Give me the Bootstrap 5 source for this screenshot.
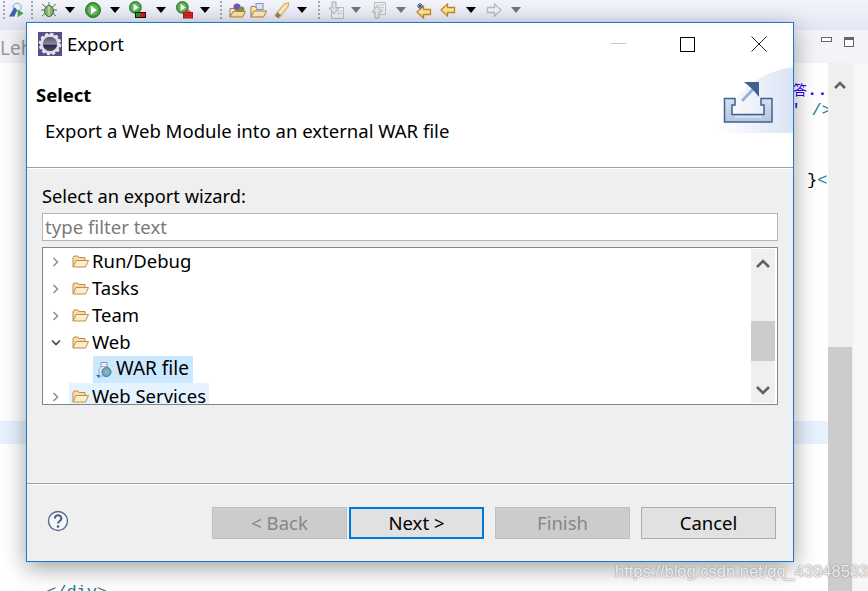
<!DOCTYPE html>
<html lang="en">
<head>
<meta charset="utf-8">
<title>Export</title>
<link rel="stylesheet" href="https://cdn.jsdelivr.net/npm/bootstrap@5.3.0/dist/css/bootstrap.min.css">
<style>
html,body{height:591px;overflow:hidden}
body{width:868px;position:relative;background:#fff;font-family:"Noto Sans","Open Sans",sans-serif;color:#000}
.tbar{height:30px;background:linear-gradient(#f3f4fb,#e3e6f5);display:grid;grid-template-columns:8px 16.5px 15px 19.5px 22.5px 22.5px 22.5px 23px 23.5px 23px 18px 14px 18.5px 23.5px 23px 18px 15px 19px 21.5px 23px 23.5px 23px 23px 23px 23px 22px;align-items:start;padding-top:0}
.tcell{display:flex;justify-content:center;height:20px;align-items:center}
.tgrip{width:2px;height:18px;background-image:linear-gradient(#a8a8a8 50%,transparent 50%);background-size:2px 4px}
.ttri{width:0;height:0;border-left:5.500px solid transparent;border-right:5.500px solid transparent;border-top:6px solid #000;margin-top:-1px}
.ttri-off{border-top-color:#777}
.ed-head{height:33px;background:#f3f4fa;color:#9a9a9a;font-size:19px}
.ed-head .lh{line-height:37px}
.ed-ctl{gap:12px;padding-right:14px;padding-bottom:9px}
.min-ic{width:11px;height:5px;border:1px solid #666;background:#fff;margin-top:-5px}
.max-ic{width:10px;height:10px;border:1px solid #666;border-top-width:3px;background:#fff}
.ed-body{height:528px}
.ed-code{flex:1;position:relative}
.hl-line{margin-top:358px;height:23px;background:#e8f2fe}
.code-end{margin-top:139px;padding-left:46px;color:#14828c;font-family:"Liberation Mono",monospace;font-size:17px;line-height:20px}
.code-side{position:absolute;left:793px;font-family:"Liberation Mono",monospace;font-size:17px;line-height:20px;white-space:nowrap}
.cs1{top:16px;color:#2a00ff;font-weight:700}
.cs1 i{font-style:normal;font-weight:400;font-size:14px;font-family:"Noto Sans CJK SC",sans-serif}
.cs2{top:38px;left:791px;color:#14828c}
.cs2 b{color:#2a00ff;font-weight:400}
.cs3{top:108px;left:807px;color:#14828c}
.cs3 b{color:#000;font-weight:400}
.ed-track{width:25px;background:#efefef;display:flex;flex-direction:column}
.ed-track .ed-sp{height:284px}
.ed-thumb{flex:1;background:#ccc;margin-right:1px}
.ed-rail{width:15px;background:#f7f7f7}
.up-ch{padding:8px 0 0 6px}
.dlg{position:absolute;left:26px;top:22px;width:768px;height:540px;border:1px solid #1a79cf;background:#efefef;box-shadow:0 6px 22px rgba(0,0,0,.38);display:flex;flex-direction:column}
.dlg-top{background:#fff;height:145px;border-bottom:1px solid #a0a0a0;position:relative;flex:none}
.dlg-title{height:42px;font-size:18.500px;padding-left:11px;gap:5px}
.win-btns{margin-left:auto;margin-right:-1px}
.win-b{width:71px;height:42px;display:flex;align-items:center;justify-content:center}
.win-b1{padding-left:4px}
.sel-h{font-weight:700;font-size:18.500px;line-height:24px;padding:18px 0 0 9px}
.sel-d{font-size:18.550px;line-height:24px;padding:12px 0 0 18px}
.ban{position:absolute;right:0;top:44px;width:76px;height:66px}
.wiz{flex:1;border-top:1px solid #fff;padding:15px 15px 0;font-size:18.500px;position:relative}
.wiz-l{line-height:24px;margin-bottom:5px;font-size:18.300px}
.flt{display:block;width:736px;height:28px;border:1px solid #b4b4b4;background:#fff;padding:0 2px 2px;font-size:18.600px;line-height:24px;color:#7a7a7a;border-radius:0;font-family:inherit}
.flt::placeholder{color:#7a7a7a;opacity:1}
.flt:focus{outline:0;box-shadow:none}
.tree{width:736px;height:158px;margin-top:6px;border:1px solid #83858c;background:#fff;overflow:hidden;display:flex}
.tree-l{flex:1;min-width:0}
.trow{height:27px;display:flex;align-items:center;position:relative}
.tlbl{padding-bottom:2px}
.twist{width:26px;display:flex;justify-content:center;flex:none}
.fld{margin:0 3px 0 0;flex:none}
.hl-a{background:#e5f3ff;width:140px;height:27px;display:flex;align-items:center;padding-left:3px;flex:none}
.hl-s{background:#cce8ff;height:27px;margin-left:50px;display:flex;align-items:center;width:100px;padding-left:2px;gap:3px;font-size:19px}
.tscr{width:24px;background:#efefef;margin:1px 2px 1px 0;position:relative;flex:none}
.tscr-th{position:absolute;left:0;right:0;top:72px;height:40px;background:#ccc}
.tscr svg{position:absolute;left:5px}
.scr-up{top:10px}
.scr-dn{top:137px}
.foot{height:78px;border-top:1px solid #a0a0a0;box-shadow:inset 0 1px 0 #fff;flex:none;padding:23px 17px 0 20px;align-items:flex-start}
.hlp{margin-top:3px}
.foot .btn{width:135px;height:32px;border-radius:0;font-size:18.500px;padding:0;line-height:28px;font-family:inherit;--bs-btn-disabled-opacity:1}
.foot .bt-off,.foot .bt-off:disabled{background:#ccc;border:1px solid #bfbfbf;color:#868686}
.foot .bt-next{background:#e1e1e1;border:2px solid #0078d7;color:#000;margin:0 11px 0 2px}
.foot .bt-can{background:#e1e1e1;border:1px solid #adadad;color:#000;margin-left:11px}
.mk{position:absolute;left:615px;top:561px;font-family:"Liberation Sans",sans-serif;font-size:16.500px;line-height:20px;color:rgba(255,255,255,.85);text-shadow:0 0 2px #999,0 0 1px #888;white-space:nowrap}
</style>
</head>
<body>
<svg width="0" height="0" class="position-absolute">
<defs>
<symbol id="fold" viewBox="0 0 17 13"><path d="M1 12V2.500L2 1h4l1 1.500h6v3" fill="#f7dca6" stroke="#c08d4e"/><path d="M1 12l3-6.500h12.500L13.500 12z" fill="#fcecc8" stroke="#c08d4e"/></symbol>
<symbol id="play" viewBox="0 0 16 16"><circle cx="8" cy="8" r="7.500" fill="#3f9a3f" stroke="#2b7a30"/><circle cx="8" cy="8" r="5.500" fill="#68b85c"/><path d="M5.800 3.500L12 8l-6.200 4.500z" fill="#fff"/></symbol>
<symbol id="yarrow" viewBox="0 0 16 14"><path d="M1 7l6.500-6v3.500h7v5h-7V13z" fill="#fde59c" stroke="#c68a1e" stroke-width="1.300"/></symbol>
<symbol id="ychev" viewBox="0 0 8 10"><path d="M1.500 1l4 4-4 4" fill="none" stroke="#909090" stroke-width="1.600"/></symbol>
</defs>
</svg>

<div class="tbar">
<div class="tcell"><span class="tgrip"></span></div>
<div class="tcell"><svg width="18" height="18" viewBox="0 0 18 18"><circle cx="10" cy="6" r="4.500" fill="#e8eef8" stroke="#7d9ccb"/><path d="M1 16L7 6l3 3-3 7z" fill="#3d62ad"/><path d="M10.500 8.500l6.500 4-6.500 4.500z" fill="#45a045"/></svg></div>
<div class="tcell"><span class="tgrip"></span></div>
<div class="tcell"><svg width="18" height="18" viewBox="0 0 18 18"><g stroke="#4c7a66"><path d="M2 3l14 12M16 3L2 15M1 9h16M9 1v3"/></g><ellipse cx="9" cy="10" rx="4.500" ry="5.500" fill="#8db868" stroke="#3c6e4e"/><path d="M9 5v10" stroke="#e3ecd2"/></svg></div>
<div class="tcell"><span class="ttri"></span></div>
<div class="tcell"><svg width="16" height="16"><use href="#play"/></svg></div>
<div class="tcell"><span class="ttri"></span></div>
<div class="tcell"><svg width="18" height="18" viewBox="0 0 18 18"><g transform="translate(0 0) scale(.8)"><use href="#play" width="16" height="16"/></g><rect x="6.500" y="11.500" width="10" height="5" fill="#d51c1c" stroke="#111"/><rect x="7" y="12" width="4" height="4" fill="#1e9e2a"/></svg></div>
<div class="tcell"><span class="ttri"></span></div>
<div class="tcell"><svg width="18" height="18" viewBox="0 0 18 18"><g transform="scale(.8)"><use href="#play" width="16" height="16"/></g><rect x="7.500" y="11.500" width="9" height="5.500" fill="#e02a2a" stroke="#b01818"/><path d="M10 11.500V10h4v1.500M7.500 14h9" stroke="#b01818" fill="none"/></svg></div>
<div class="tcell"><span class="ttri"></span></div>
<div class="tcell"><span class="tgrip"></span></div>
<div class="tcell"><svg width="17" height="17" viewBox="0 0 17 17"><circle cx="8" cy="5" r="3.500" fill="#6a5aa8"/><circle cx="12.500" cy="7.500" r="3" fill="#5f9e58"/><svg y="3" width="17" height="13" viewBox="0 0 17 13"><path d="M1 12V3.500h4l1 1.500h2v.5h6" fill="none" stroke="#b87f2e"/><path d="M1 12l3-5.500h12.500L13.500 12z" fill="#fbe3a8" stroke="#b87f2e"/></svg></svg></div>
<div class="tcell"><svg width="17" height="17" viewBox="0 0 17 17"><rect x="6" y="1.500" width="7" height="6" fill="#dfe8f5" stroke="#7b93b8"/><svg y="3" width="17" height="13" viewBox="0 0 17 13"><path d="M1 12V1.500h4l1 1.500h1" fill="#fbe9bf" stroke="#b87f2e"/><path d="M1 12l3-6h12.500L13.500 12z" fill="#fcecc8" stroke="#b87f2e"/></svg></svg></div>
<div class="tcell"><svg width="18" height="18" viewBox="0 0 18 18"><path d="M2 14L11 3l5-1.500L15 6 6 17z" fill="#f8e1a4" stroke="#d2a752"/><path d="M2 15l3-4 3 3-3 3z" fill="#8d7f70"/><path d="M6 13l7-8" stroke="#fff"/></svg></div>
<div class="tcell"><span class="ttri"></span></div>
<div class="tcell"><span class="tgrip"></span></div>
<div class="tcell"><svg width="18" height="18" viewBox="0 0 18 18"><path d="M4.500 6.500h12v11h-12z" fill="#eef0f2" stroke="#b9bcc0"/><path d="M10 10h5M10 12.500h5" stroke="#c8cbcf"/><path d="M5 1h4v6h3l-5 6-5-6h3z" fill="#e0e3e5" stroke="#aeb2b6"/></svg></div>
<div class="tcell"><span class="ttri ttri-off"></span></div>
<div class="tcell"><svg width="18" height="18" viewBox="0 0 18 18"><path d="M5.500 1.500h11v12h-11z" fill="#eef0f2" stroke="#b9bcc0"/><path d="M7 4h8M7 6.500h8M12 9h3" stroke="#c8cbcf"/><path d="M6 17v-6H3l5-6 5 6h-3v6z" fill="#e4e6e8" stroke="#aeb2b6"/></svg></div>
<div class="tcell"><span class="ttri ttri-off"></span></div>
<div class="tcell"><svg width="17" height="17" viewBox="0 0 17 17"><svg y="3" width="16" height="14"><use href="#yarrow"/></svg><path d="M4 1v6M1 4h6M2 2l4 4M6 2L2 6" stroke="#2f4f9a"/></svg></div>
<div class="tcell"><svg width="16" height="14"><use href="#yarrow"/></svg></div>
<div class="tcell"><span class="ttri"></span></div>
<div class="tcell"><svg width="16" height="14" viewBox="0 0 16 14"><path d="M15 7L8.500 1v3.500h-7v5h7V13z" fill="#f2f3f5" stroke="#babdc2" stroke-width="1.300"/></svg></div>
<div class="tcell"><span class="ttri ttri-off"></span></div>
</div>

<div class="ed-head d-flex justify-content-between">
<span class="lh">Leh</span>
<div class="d-flex align-items-center ed-ctl"><span class="min-ic"></span><span class="max-ic"></span></div>
</div>
<div class="ed-body d-flex">
<div class="ed-code overflow-hidden">
<div class="hl-line"></div>
<div class="code-end">&lt;/div&gt;</div>
<span class="code-side cs1"><i>答</i>..</span>
<span class="code-side cs2"><b>'</b> /&gt;</span>
<span class="code-side cs3"><b>}</b>&lt;</span>
</div>
<div class="ed-track"><div class="ed-sp up-ch"><svg width="12" height="8" viewBox="0 0 12 8"><path d="M1 7l5-5 5 5" fill="none" stroke="#606060" stroke-width="2.500"/></svg></div><div class="ed-thumb"></div></div>
<div class="ed-rail"></div>
</div>

<div class="dlg">
<div class="dlg-top">
<div class="dlg-title d-flex align-items-center">
<svg width="24" height="24" viewBox="0 0 24 24"><defs><linearGradient id="gc" x1="0" y1="0" x2="0" y2="1"><stop offset="0" stop-color="#55546a"/><stop offset=".5" stop-color="#8c8aa0"/><stop offset=".6" stop-color="#2f2d42"/><stop offset="1" stop-color="#4a4860"/></linearGradient></defs><rect width="24" height="24" fill="#5d4a8c"/><circle cx="12" cy="12" r="8.500" fill="none" stroke="#dcdce2" stroke-width="3"/><circle cx="12" cy="12" r="10" fill="none" stroke="#e8e8ec" stroke-width="2.500" stroke-dasharray="3 2.240"/><circle cx="12" cy="12" r="7" fill="url(#gc)"/></svg>
<span>Export</span>
<div class="win-btns d-flex">
<div class="win-b win-b1"><svg width="15" height="2"><rect width="15" height="1" fill="#c8c8c8"/></svg></div>
<div class="win-b"><svg width="15" height="15"><rect x=".5" y=".5" width="14" height="14" fill="none" stroke="#000"/></svg></div>
<div class="win-b"><svg width="16" height="16"><path d="M.5.500l15 15M15.500.500l-15 15" stroke="#222"/></svg></div>
</div>
</div>
<div class="sel-h">Select</div>
<div class="sel-d">Export a Web Module into an external WAR file</div>
<svg class="ban" viewBox="0 0 76 66"><defs><linearGradient id="bg" x1="0" x2="1"><stop offset="0" stop-color="#fff"/><stop offset="1" stop-color="#dbe4f5"/></linearGradient><linearGradient id="tr" x1="0" y1="0" x2="0" y2="1"><stop offset="0" stop-color="#d6e1f0"/><stop offset="1" stop-color="#b4c5de"/></linearGradient></defs><path d="M0 66C10 30 40 5 76 0v66z" fill="url(#bg)"/><path d="M25 34l14-15" stroke="#9cb2d2" stroke-width="3"/><path d="M27 15h15v15l-5-6-4-4z" fill="#3f6294"/><path d="M7.500 31.500H18V38h-3v9.500h32V38h-3v-6.500h11V55H7.500z" fill="url(#tr)" stroke="#3f6294" stroke-width="1.500"/><path d="M18 50h27" stroke="#eef3fa" stroke-width="1"/></svg>
</div>

<div class="wiz">
<div class="wiz-l">Select an export wizard:</div>
<input class="flt" type="text" placeholder="type filter text">
<div class="tree">
<div class="tree-l">
<div class="trow"><span class="twist"><svg width="8" height="10"><use href="#ychev"/></svg></span><span class="hl-a bg-transparent"><svg class="fld" width="17" height="13"><use href="#fold"/></svg><span class="tlbl">Run/Debug</span></span></div>
<div class="trow"><span class="twist"><svg width="8" height="10"><use href="#ychev"/></svg></span><span class="hl-a bg-transparent"><svg class="fld" width="17" height="13"><use href="#fold"/></svg><span class="tlbl">Tasks</span></span></div>
<div class="trow"><span class="twist"><svg width="8" height="10"><use href="#ychev"/></svg></span><span class="hl-a bg-transparent"><svg class="fld" width="17" height="13"><use href="#fold"/></svg><span class="tlbl">Team</span></span></div>
<div class="trow"><span class="twist"><svg width="10" height="8"><path d="M1 1.500l4 4 4-4" fill="none" stroke="#444" stroke-width="1.600"/></svg></span><span class="hl-a bg-transparent"><svg class="fld" width="17" height="13"><use href="#fold"/></svg><span class="tlbl">Web</span></span></div>
<div class="trow"><span class="hl-s"><svg width="18" height="18" viewBox="0 0 18 18"><path d="M6 1.500h6v4H6z" fill="#eef1f6" stroke="#8a97ae"/><path d="M6 5.500L4 8v7h9V5.500z" fill="#dfe6f2" stroke="#a0abbf"/><circle cx="11.500" cy="11" r="4.500" fill="#6ea8c8" stroke="#3f78b5"/><path d="M9.500 10l2-2 2 2-1 3h-2z" fill="#8ec07a"/><path d="M1 14l3.500 3.500V14z" fill="#2f62a8"/></svg><span class="tlbl">WAR file</span></span></div>
<div class="trow"><span class="twist"><svg width="8" height="10"><use href="#ychev"/></svg></span><span class="hl-a"><svg class="fld" width="17" height="13"><use href="#fold"/></svg><span class="tlbl">Web Services</span></span></div>
</div>
<div class="tscr">
<svg class="scr-up" width="14" height="9" viewBox="0 0 14 9"><path d="M1 8l6-6 6 6" fill="none" stroke="#606060" stroke-width="2.500"/></svg>
<div class="tscr-th"></div>
<svg class="scr-dn" width="14" height="9" viewBox="0 0 14 9"><path d="M1 1l6 6 6-6" fill="none" stroke="#606060" stroke-width="2.500"/></svg>
</div>
</div>
</div>

<div class="foot d-flex">
<svg class="hlp" width="22" height="22" viewBox="0 0 22 22"><circle cx="11" cy="11" r="9.500" fill="#f6f7fa" stroke="#5a6c8e" stroke-width="1.400"/><path d="M7.800 8.500c0-4.500 6.800-4 6.600 0 0 2.600-3.300 2.400-3.300 5" fill="none" stroke="#4a5c80" stroke-width="2"/><circle cx="11" cy="16.500" r="1.300" fill="#4a5c80"/></svg>
<div class="d-flex ms-auto">
<button class="btn bt-off" disabled>&lt; Back</button>
<button class="btn bt-next">Next &gt;</button>
<button class="btn bt-off" disabled>Finish</button>
<button class="btn bt-can">Cancel</button>
</div>
</div>
</div>

<div class="mk">https://blog.csdn.net/qq_43948583</div>
</body>
</html>
